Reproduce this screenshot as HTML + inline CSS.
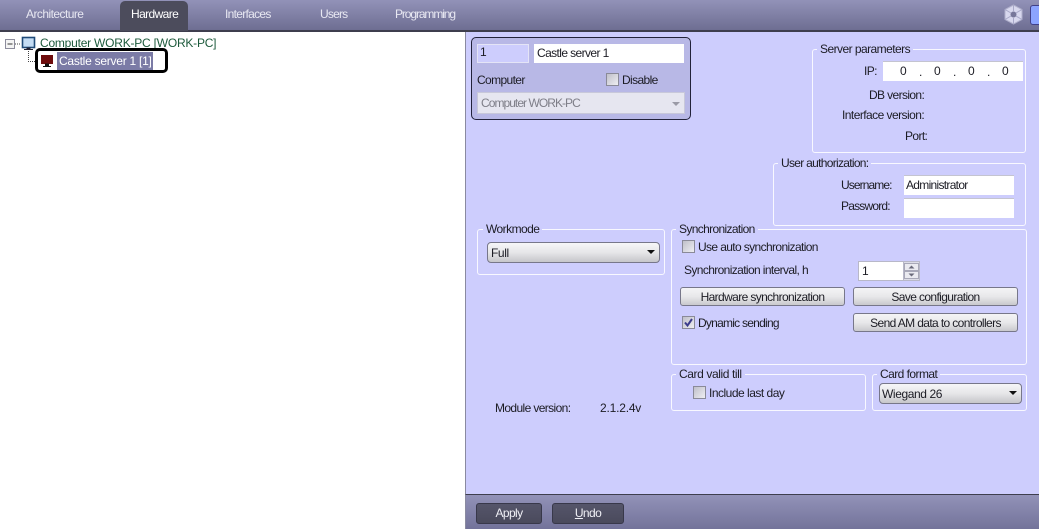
<!DOCTYPE html>
<html><head><meta charset="utf-8">
<style>
html,body{margin:0;padding:0;width:1039px;height:529px;overflow:hidden;background:#fff}
body{position:relative;font:12px/14px "Liberation Sans",sans-serif;color:#1c1c24}
div,span{position:absolute;box-sizing:border-box;white-space:nowrap}
.t{line-height:14px;letter-spacing:-.62px}
.tab{color:#e8e8f2;top:7px;letter-spacing:-.8px}
.gb{border:1px solid #f8f8ff;border-radius:3px}
.leg{background:#cdcdfd;padding:0 3px;line-height:14px;letter-spacing:-.55px}
.inp{background:#fff;border-top:1px solid #c4c4d0;line-height:18px;padding-left:3px}
.btn{border:1px solid #77778a;border-radius:3px;background:linear-gradient(#f4f4f6,#e8e8ea 50%,#c9c9cd);text-align:center;line-height:18px;letter-spacing:-.62px}
.sel{border:1px solid #77778a;border-radius:4px;background:linear-gradient(#f6f6f8,#e6e6e8 50%,#c6c6ca);line-height:21px;padding-left:3px;letter-spacing:-.4px}
.sel i{position:absolute;right:4px;top:7px;width:0;height:0;border:4px solid transparent;border-top:4px solid #111;border-bottom:0}
.cb{width:13px;height:13px;border:1px solid #8a8a98;background:linear-gradient(135deg,#c0c0ca,#eeeef2)}
.dk{border:1px solid #38384a;border-radius:3px;background:linear-gradient(#55556a,#4a4a5c);color:#f0f0f6;text-align:center;letter-spacing:-.6px}
</style></head><body>

<!-- top bar -->
<div style="left:0;top:0;width:1039px;height:32px;background:linear-gradient(#9292b8,#6e6e92);border-bottom:2px solid #3e3e4e"></div>
<div style="left:120px;top:1px;width:68px;height:30px;background:#4c4c5c;border-radius:5px 5px 0 0"></div>
<span class="t tab" style="left:26px;letter-spacing:-.55px">Architecture</span>
<span class="t tab" style="left:131px;color:#fff;letter-spacing:-.6px">Hardware</span>
<span class="t tab" style="left:225px;letter-spacing:-.7px">Interfaces</span>
<span class="t tab" style="left:320px">Users</span>
<span class="t tab" style="left:395px;letter-spacing:-1.1px">Programming</span>
<svg style="position:absolute;left:1003px;top:4px" width="21" height="21" viewBox="0 0 21 21"><polygon points="10.5,1 19,5.5 19,15.5 10.5,20 2,15.5 2,5.5" fill="#d8d8ee" stroke="#b0b0cc"/><circle cx="10.5" cy="10.5" r="3" fill="#77779a"/><path d="M10.5 1V7M10.5 14V20M2 5.5L8 9M13 12L19 15.5M19 5.5L13 9M8 12L2 15.5" stroke="#a8a8c8"/></svg>
<div style="left:1030px;top:5px;width:12px;height:20px;background:#8ca4ff;border:1px solid #40408a;border-radius:3px"></div>

<!-- tree -->
<svg style="position:absolute;left:0;top:32px" width="60" height="40" viewBox="0 0 60 40">
<rect x="5.5" y="7.5" width="9" height="9" fill="#f4f4f4" stroke="#8c8c9c"/><path d="M7.5 12H12.5" stroke="#333"/>
<path d="M15 12H21M28.500 19V29.500H38" fill="none" stroke="#444" stroke-dasharray="1 1"/>
<rect x="22.500" y="5.500" width="12" height="10" fill="#c4dcf4" stroke="#1f4a78" stroke-width="1.6"/>
<path d="M27 16h3v1h-3zM24 17.500H33" stroke="#223" fill="#223"/>
<rect x="41" y="23" width="12" height="9" fill="#6e0c0c"/>
<path d="M45.500 32h3v2h-3zM43 34.500H51" stroke="#111" fill="#111"/>
</svg>
<span class="t" style="left:40px;top:36px;color:#1d5a3c;letter-spacing:-.22px">Computer WORK-PC [WORK-PC]</span>
<div style="left:57px;top:52px;width:96px;height:18px;background:#7b7ba6;color:#fff;line-height:18px;padding-left:2px;letter-spacing:-.25px">Castle server 1 [1]</div>
<div style="left:35px;top:48px;width:133px;height:25px;border:3px solid #000;border-radius:5px"></div>

<!-- right panel -->
<div style="left:465px;top:32px;width:574px;height:462px;background:#cdcdfd;border-left:1px solid #8a8aa0"></div>

<!-- name box -->
<div style="left:471px;top:37px;width:220px;height:83px;background:#b8b8e6;border:1px solid #22223a;border-radius:5px"></div>
<div style="left:477px;top:44px;width:52px;height:19px;background:#cdcdfd;border:1px solid #e4e4f6;line-height:15px;padding-left:2px">1</div>
<div class="inp" style="left:534px;top:44px;width:150px;height:19px;border:0;line-height:18px;padding-left:3px;letter-spacing:-.6px">Castle server 1</div>
<span class="t" style="left:477px;top:73px">Computer</span>
<div class="cb" style="left:606px;top:73px"></div>
<span class="t" style="left:622px;top:73px">Disable</span>
<div style="left:477px;top:92px;width:208px;height:22px;background:#e6e6f0;border:1px solid #c8c8da;color:#7e7e88;line-height:20px;padding-left:3px;letter-spacing:-.95px">Computer WORK-PC<i style="position:absolute;right:4px;top:9px;width:0;height:0;border:4px solid transparent;border-top:4px solid #9a9aa6;border-bottom:0"></i></div>

<!-- server params -->
<div class="gb" style="left:812px;top:49px;width:214px;height:104px"></div>
<span class="leg" style="left:817px;top:42px">Server parameters</span>
<span class="t" style="left:864px;top:64px">IP:</span>
<div style="left:883px;top:61px;width:140px;height:20px;background:#fff;border-top:1px solid #c4c4d0"></div>
<span class="t" style="left:900px;top:64px">0</span><span class="t" style="left:919px;top:65px">.</span>
<span class="t" style="left:934px;top:64px">0</span><span class="t" style="left:953px;top:65px">.</span>
<span class="t" style="left:968px;top:64px">0</span><span class="t" style="left:987px;top:65px">.</span>
<span class="t" style="left:1002px;top:64px">0</span>
<span class="t" style="left:869px;top:88px">DB version:</span>
<span class="t" style="left:842px;top:108px;letter-spacing:-.55px">Interface version:</span>
<span class="t" style="left:905px;top:129px">Port:</span>

<!-- user auth -->
<div class="gb" style="left:773px;top:163px;width:253px;height:63px"></div>
<span class="leg" style="left:778px;top:156px;letter-spacing:-.7px">User authorization:</span>
<span class="t" style="left:841px;top:178px;letter-spacing:-.9px">Username:</span>
<div class="inp" style="left:904px;top:175px;width:110px;height:20px;border-top:1px solid #c4c4d0;letter-spacing:-.7px;padding-left:2px">Administrator</div>
<span class="t" style="left:841px;top:199px;letter-spacing:-.8px">Password:</span>
<div class="inp" style="left:904px;top:198px;width:110px;height:20px"></div>

<!-- workmode -->
<div class="gb" style="left:477px;top:229px;width:188px;height:46px"></div>
<span class="leg" style="left:483px;top:222px">Workmode</span>
<div class="sel" style="left:487px;top:242px;width:173px;height:21px">Full<i></i></div>

<!-- sync -->
<div class="gb" style="left:671px;top:229px;width:356px;height:136px"></div>
<span class="leg" style="left:676px;top:222px;letter-spacing:-.65px">Synchronization</span>
<div class="cb" style="left:682px;top:240px"></div>
<span class="t" style="left:698px;top:240px">Use auto synchronization</span>
<span class="t" style="left:684px;top:263px">Synchronization interval, h</span>
<div style="left:858px;top:261px;width:62px;height:20px;background:#fff;border:1px solid #b8b8c8;line-height:18px;padding-left:3px">1</div>
<div style="left:903px;top:262px;width:16px;height:18px;background:#dcdce6;border-left:1px solid #b8b8c8"></div>
<svg style="position:absolute;left:904px;top:263px" width="15" height="16" viewBox="0 0 15 16"><rect x=".5" y=".5" width="14" height="7" fill="#eaeaf0" stroke="#a8a8b8"/><rect x=".5" y="8.500" width="14" height="7" fill="#eaeaf0" stroke="#a8a8b8"/><path d="M4.500 5.500L7.500 2.500L10.500 5.500Z M4.500 10.500L7.500 13.500L10.500 10.500Z" fill="#6a6a7a"/></svg>
<div class="btn" style="left:680px;top:287px;width:165px;height:19px">Hardware synchronization</div>
<div class="btn" style="left:853px;top:287px;width:165px;height:19px">Save configuration</div>
<div class="cb" style="left:682px;top:316px"></div>
<svg style="position:absolute;left:682px;top:316px" width="13" height="13" viewBox="0 0 13 13"><path d="M3 6.500L5.500 9.500L10 3" fill="none" stroke="#3c3c8c" stroke-width="2"/></svg>
<span class="t" style="left:698px;top:316px;letter-spacing:-.75px">Dynamic sending</span>
<div class="btn" style="left:853px;top:313px;width:165px;height:19px">Send AM data to controllers</div>

<!-- card -->
<div class="gb" style="left:671px;top:374px;width:195px;height:37px"></div>
<span class="leg" style="left:676px;top:367px;letter-spacing:-.4px">Card valid till</span>
<div class="cb" style="left:693px;top:386px"></div>
<span class="t" style="left:709px;top:386px;letter-spacing:-.5px">Include last day</span>
<div class="gb" style="left:872px;top:374px;width:155px;height:37px"></div>
<span class="leg" style="left:877px;top:367px">Card format</span>
<div class="sel" style="left:879px;top:383px;width:143px;height:21px;padding-left:2px">Wiegand 26<i></i></div>

<span class="t" style="left:495px;top:401px">Module version:</span>
<span class="t" style="left:600px;top:401px;letter-spacing:-.2px">2.1.2.4v</span>

<!-- bottom -->
<div style="left:465px;top:494px;width:574px;height:35px;background:linear-gradient(#9292b8,#73739a);border-top:1px solid #3e3e4e;border-left:1px solid #8a8aa0"></div>
<div class="dk" style="left:476px;top:503px;width:66px;height:21px;line-height:19px">Apply</div>
<div class="dk" style="left:552px;top:503px;width:72px;height:21px;line-height:19px"><u>U</u>ndo</div>
</body></html>
